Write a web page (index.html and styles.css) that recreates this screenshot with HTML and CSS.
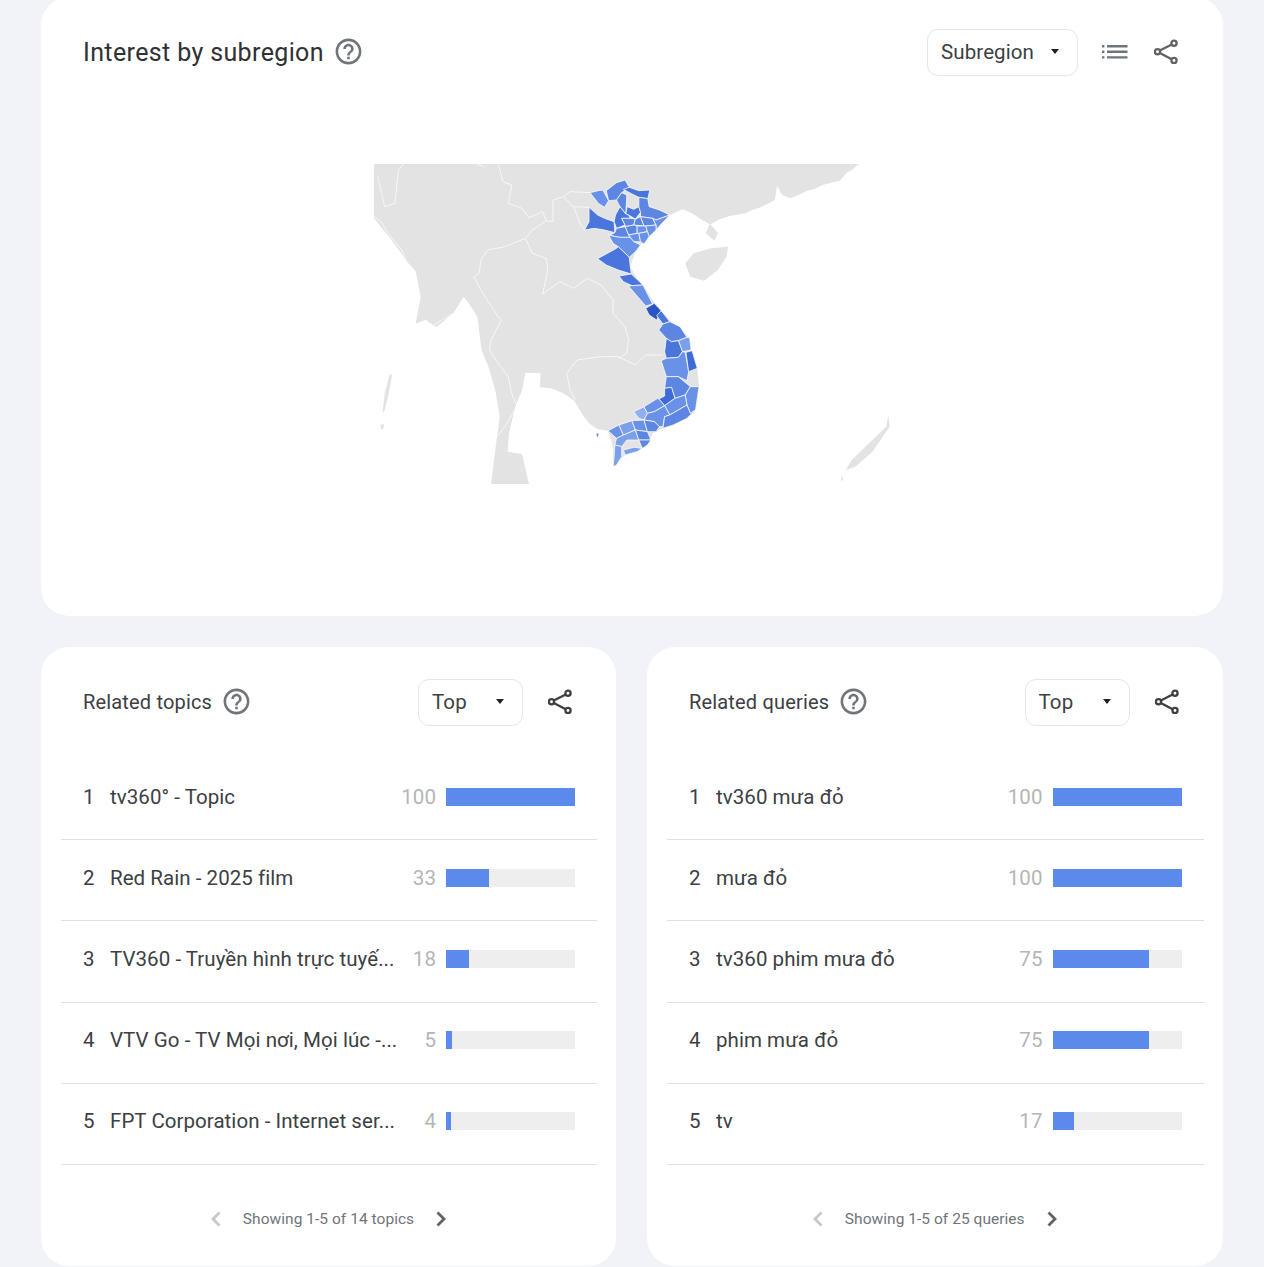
FILE: index.html
```html
<!DOCTYPE html>
<html lang="en">
<head>
<meta charset="utf-8">
<title>Interest by subregion</title>
<link rel="stylesheet" href="styles.css">
</head>
<body>
<svg class="defs" width="0" height="0" aria-hidden="true">
  <symbol id="help" viewBox="0 0 24 24"><path d="M11 18h2v-2h-2v2zm1-16C6.48 2 2 6.48 2 12s4.48 10 10 10 10-4.48 10-10S17.52 2 12 2zm0 18c-4.41 0-8-3.59-8-8s3.59-8 8-8 8 3.59 8 8-3.59 8-8 8zm0-14c-2.21 0-4 1.79-4 4h2c0-1.1.9-2 2-2s2 .9 2 2c0 2-3 1.75-3 5h2c0-2.25 3-2.5 3-5 0-2.21-1.79-4-4-4z"/></symbol>
  <symbol id="share" viewBox="0 0 24 24"><g fill="none" stroke="currentColor" stroke-width="2.300"><circle cx="20" cy="3.700" r="2.600"/><circle cx="3.500" cy="12.300" r="2.600"/><circle cx="20" cy="21" r="2.600"/><path d="M5.800 11.100 17.700 5M5.800 13.500 17.700 19.700"/></g></symbol>
  <symbol id="caret" viewBox="0 0 10 6"><path d="M0 0h10L5 6z"/></symbol>
  <symbol id="list" viewBox="0 0 26 14"><path d="M0 0h2.400v2.400H0zM0 5.600h2.400V8H0zM0 11.200h2.400v2.400H0zM5 0h20.500v2.400H5zM5 5.600h20.500V8H5zM5 11.200h20.500v2.400H5z"/></symbol>
  <symbol id="prev" viewBox="0 0 12 16"><path d="M9.500 1.500 3 8l6.500 6.500" fill="none" stroke="currentColor" stroke-width="2.800"/></symbol>
  <symbol id="next" viewBox="0 0 12 16"><path d="M2.500 1.500 9 8l-6.500 6.500" fill="none" stroke="currentColor" stroke-width="2.800"/></symbol>
</svg>
<main class="page">
  <section class="card card-map">
    <header class="card-head head-map">
      <h2 class="title title-large">Interest by subregion</h2>
      <svg class="icon-help"><use href="#help"/></svg>
      <div class="spacer"></div>
      <div class="select select-region"><span>Subregion</span><svg class="caret"><use href="#caret"/></svg></div>
      <svg class="icon-list"><use href="#list"/></svg>
      <svg class="icon-share"><use href="#share"/></svg>
    </header>
    <svg class="map" viewBox="39 42 1505 960" preserveAspectRatio="none" width="517" height="320" role="img" aria-label="Map of Vietnam by subregion">
      <g class="land">
        <path d="M39 42H1450L1430 60 1415 68 1395 92 1370 98 1345 105 1320 118 1300 122 1275 135 1250 145 1228 135 1212 108 1206 150 1165 172 1140 180 1120 190 1075 198 1045 208 1015 225 1005 250 1030 272 1040 248 1020 225 990 207 965 190 938 178 900 195 870 228 840 260 815 285 800 305 785 350 810 395 822 405 850 450 875 482 900 510 950 555 962 600 980 655 985 710 975 780 950 805 880 835 850 850 835 885 820 895 770 915 735 950 735 890 720 842 690 838 665 820 650 800 622 752 590 730 555 715 522 712 524 670 480 668 470 720 450 770 432 850 428 905 470 912 490 1002H380L392 900 405 800 392 720 372 650 352 600 340 500 318 465 300 440 270 490 220 532 190 510 160 522 175 440 160 362 130 330 120 312 90 270 60 232 39 205Z"/>
        <path d="M945 340 970 310 1020 295 1070 290 1065 320 1040 360 1000 392 960 380Z"/>
        <path d="M85 672 92 675 80 740 70 780 64 790 70 730Z"/>
        <path d="M58 825 68 822 66 838 60 838Z"/>
        <path d="M1536 795 1540 830 1490 905 1440 950 1412 960 1430 930 1480 880 1530 830Z"/>
        <path d="M1400 975 1405 990 1398 992Z"/>
      </g>
      <g class="borders">
        <path d="M400 42 415 95 440 105 430 160 470 175 490 203 530 185 540 212 560 215 560 150 590 140 620 170 665 172"/>
        <path d="M590 140 610 125 668 128"/>
        <path d="M620 170 640 222 652 240"/>
        <path d="M540 212 500 240 480 265 420 290 370 300 350 330 345 370 330 380 350 420 400 500 410 510 380 570 375 600 400 640 430 680 440 730 455 770 420 830 395 862"/>
        <path d="M480 265 500 310 540 325 545 360 530 432 580 395 620 415 660 385 700 405 735 450 735 490 770 530 780 570 775 610 750 625"/>
        <path d="M625 750 610 720 600 670 630 630 700 620 750 620 800 645 830 615 880 615"/>
        <path d="M50 80 70 170 100 160 110 60 125 42"/>
        <path d="M39 200 60 215 80 250 120 300 140 350"/>
        <path d="M340 42 360 52"/>
        <path d="M160 522 190 510 205 530 270 490"/>
      </g>
      <g class="prov">
        <path class="c2" d="M668 128 692 122 705 120 722 152 710 172 692 160Z"/>
        <path class="c3" d="M715 122 745 98 770 90 782 112 760 128 745 150 722 152Z"/>
        <path class="c4" d="M765 118 782 112 810 122 842 120 836 146 810 142 790 132Z"/>
        <path class="c3" d="M745 150 760 128 775 135 773 172 772 192 755 170Z"/>
        <path class="c4" d="M776 170 795 178 810 170 815 187 800 207 780 195 772 192Z"/>
        <path class="c3" d="M810 142 836 146 840 170 870 180 900 195 860 210 850 205 815 200 815 187 810 170Z"/>
        <path class="c4" d="M665 172 690 195 710 205 738 215 740 248 710 240 680 235 652 240 665 215Z"/>
        <path class="c4" d="M755 170 772 192 780 195 785 205 760 205 770 225 745 235 738 215 742 195Z"/>
        <path class="c3" d="M760 205 785 205 800 207 795 225 770 230 770 225Z"/>
        <path class="c3" d="M800 207 815 200 825 228 795 225Z"/>
        <path class="c3" d="M815 200 850 205 860 225 830 228 825 228Z"/>
        <path class="c2" d="M850 205 860 210 900 195 870 228 860 240 860 225Z"/>
        <path class="c3" d="M770 230 795 225 805 228 805 250 780 255Z"/>
        <path class="c2" d="M805 228 830 228 835 245 810 250 805 250Z"/>
        <path class="c2" d="M830 228 860 225 860 240 840 260 835 245Z"/>
        <path class="c2" d="M780 255 805 250 810 250 815 275 795 275 785 262Z"/>
        <path class="c2" d="M810 250 835 245 840 260 825 282 815 275Z"/>
        <path class="c3" d="M745 235 770 230 780 255 785 262 755 262 725 256 740 248Z"/>
        <path class="c2" d="M722 256 755 262 785 262 795 275 815 285 800 305 782 322 750 290 735 280Z"/>
        <path class="c4" d="M690 326 745 295 750 290 782 322 785 350 788 372 750 360 715 345Z"/>
        <path class="c4" d="M752 378 788 372 822 405 790 407 765 395Z"/>
        <path class="c2" d="M780 408 790 407 822 405 850 462 830 468Z"/>
        <path class="c6" d="M830 475 855 460 875 482 862 510 840 495Z"/>
        <path class="c4" d="M862 497 875 482 900 515 880 522Z"/>
        <path class="c3" d="M868 540 880 522 900 515 930 530 950 562 925 572 905 575 890 565Z"/>
        <path class="c1" d="M925 572 950 562 958 563 962 600 937 605Z"/>
        <path class="c4" d="M890 565 905 575 925 572 937 605 925 622 890 625 885 605Z"/>
        <path class="c2" d="M890 625 925 622 937 605 945 607 955 665 950 692 925 680 890 680 875 632Z"/>
        <path class="c5" d="M947 607 965 602 980 655 955 665Z"/>
        <path class="c3" d="M890 680 925 680 960 710 945 735 915 745 905 712 885 715Z"/>
        <path class="c5" d="M885 715 905 712 915 745 885 767 868 747 885 738Z"/>
        <path class="c2" d="M960 710 985 710 975 780 960 790 950 765 945 735Z"/>
        <path class="c2" d="M915 745 945 735 950 765 900 795 885 767Z"/>
        <path class="c0" d="M795 785 825 770 835 790 825 810 810 805Z"/>
        <path class="c2" d="M825 770 865 745 868 747 885 767 855 785 835 790Z"/>
        <path class="c2" d="M835 790 855 785 885 767 900 795 885 800 880 830 870 830 855 815 825 810Z"/>
        <path class="c3" d="M885 800 900 795 950 765 960 790 975 780 950 805 910 825 880 835Z"/>
        <path class="c2" d="M720 842 752 825 765 855 745 865Z"/>
        <path class="c1" d="M752 825 790 812 800 840 765 855Z"/>
        <path class="c2" d="M790 812 825 810 835 845 800 840Z"/>
        <path class="c3" d="M825 810 855 815 870 830 860 845 835 845Z"/>
        <path class="c1" d="M745 865 765 855 800 840 810 870 775 870 760 890 740 885Z"/>
        <path class="c3" d="M800 840 835 845 845 870 810 870Z"/>
        <path class="c3" d="M810 870 845 870 835 885 820 895Z"/>
        <path class="c1" d="M740 885 760 890 760 920 745 945 735 950 738 920Z"/>
        <path class="c1" d="M765 900 795 892 820 895 805 905 770 915Z"/>
        <path class="c2" d="M686 848 694 850 692 862 686 860Z"/>
      </g>
    </svg>
  </section>

  <div class="pair">
    <section class="card">
      <header class="card-head">
        <h2 class="title">Related topics</h2>
        <svg class="icon-help"><use href="#help"/></svg>
        <div class="spacer"></div>
        <div class="select"><span>Top</span><svg class="caret"><use href="#caret"/></svg></div>
        <svg class="icon-share dark"><use href="#share"/></svg>
      </header>
      <ol class="rows">
        <li class="row"><span class="rank">1</span><span class="label">tv360° - Topic</span><span class="value">100</span><span class="track"><span class="fill" style="width:100%"></span></span></li>
        <li class="row"><span class="rank">2</span><span class="label">Red Rain - 2025 film</span><span class="value">33</span><span class="track"><span class="fill" style="width:33%"></span></span></li>
        <li class="row"><span class="rank">3</span><span class="label">TV360 - Truyền hình trực tuyế...</span><span class="value">18</span><span class="track"><span class="fill" style="width:18%"></span></span></li>
        <li class="row"><span class="rank">4</span><span class="label">VTV Go - TV Mọi nơi, Mọi lúc -...</span><span class="value">5</span><span class="track"><span class="fill" style="width:5%"></span></span></li>
        <li class="row"><span class="rank">5</span><span class="label">FPT Corporation - Internet ser...</span><span class="value">4</span><span class="track"><span class="fill" style="width:4%"></span></span></li>
      </ol>
      <footer class="pager">
        <svg class="chev off"><use href="#prev"/></svg>
        <span>Showing 1-5 of 14 topics</span>
        <svg class="chev"><use href="#next"/></svg>
      </footer>
    </section>
    <section class="card">
      <header class="card-head">
        <h2 class="title">Related queries</h2>
        <svg class="icon-help"><use href="#help"/></svg>
        <div class="spacer"></div>
        <div class="select"><span>Top</span><svg class="caret"><use href="#caret"/></svg></div>
        <svg class="icon-share dark"><use href="#share"/></svg>
      </header>
      <ol class="rows">
        <li class="row"><span class="rank">1</span><span class="label">tv360 mưa đỏ</span><span class="value">100</span><span class="track"><span class="fill" style="width:100%"></span></span></li>
        <li class="row"><span class="rank">2</span><span class="label">mưa đỏ</span><span class="value">100</span><span class="track"><span class="fill" style="width:100%"></span></span></li>
        <li class="row"><span class="rank">3</span><span class="label">tv360 phim mưa đỏ</span><span class="value">75</span><span class="track"><span class="fill" style="width:75%"></span></span></li>
        <li class="row"><span class="rank">4</span><span class="label">phim mưa đỏ</span><span class="value">75</span><span class="track"><span class="fill" style="width:75%"></span></span></li>
        <li class="row"><span class="rank">5</span><span class="label">tv</span><span class="value">17</span><span class="track"><span class="fill" style="width:17%"></span></span></li>
      </ol>
      <footer class="pager">
        <svg class="chev off"><use href="#prev"/></svg>
        <span>Showing 1-5 of 25 queries</span>
        <svg class="chev"><use href="#next"/></svg>
      </footer>
    </section>
  </div>
</main>
</body>
</html>
```

FILE: styles.css
```css
* { box-sizing: border-box; }
html, body { margin: 0; padding: 0; }
body {
  background: #f1f3f9;
  color: #202124;
  font-family: Roboto, "Noto Sans", sans-serif;
  overflow: hidden;
  height: 1267px;
}
.defs { display: block; }
.page {
  display: flex;
  flex-direction: column;
  gap: 31px;
  margin-top: -3px;
  padding: 0 41px;
}
.card {
  background: #fff;
  border-radius: 28px;
  min-width: 0;
}
.card-map { height: 619px; padding-top: 32px; }
.pair {
  display: grid;
  grid-template-columns: 575px 575.500px;
  gap: 31px;
}
.pair .card { height: 619px; padding-top: 32px; }
.card-head {
  display: flex;
  align-items: center;
  height: 47px;
  padding: 0 44px 0 42px;
}
.head-map { padding-right: 45px; }
.title {
  margin: 0 0 2px;
  font-weight: 400;
  font-size: 20px;
  letter-spacing: .17px;
  color: #3c4043;
}
.title-large { margin-bottom: 0; font-size: 25px; letter-spacing: .37px; color: #303134; }
.icon-help { width: 31px; height: 31px; margin: 0 0 2px 9px; fill: #70757a; }
.title-large + .icon-help { margin-left: 9px; }
.spacer { flex: 1; }
.select {
  display: flex;
  align-items: center;
  justify-content: space-between;
  width: 105px;
  height: 47px;
  padding: 0 18px 2px 13px;
  border: 1px solid #e6e6e6;
  border-radius: 11px;
  font-size: 20.500px;
  letter-spacing: .1px;
  color: #3c4043;
}
.select-region { width: 151px; }
.caret { width: 8px; height: 5px; fill: #202124; }
.icon-list { width: 26px; height: 14px; margin: 0 0 2px 24px; fill: #70757a; }
.icon-share { width: 24px; height: 25px; margin: 0 0 2px 26px; color: #5f6368; }
.icon-share.dark { margin-left: 25px; color: #3c4043; }
.map { display: block; margin: 88px auto 0; filter: blur(.35px); }
.land { fill: #e3e3e3; }
.borders { fill: none; stroke: #fff; stroke-width: 2.500; opacity: .85; }
.prov path { stroke: #fff; stroke-width: 2.200; stroke-linejoin: round; }
.c0 { fill: #90aff0; }
.c1 { fill: #7c9fec; }
.c2 { fill: #6a91e8; }
.c3 { fill: #5c86e2; }
.c4 { fill: #4a76dc; }
.c5 { fill: #3e6bd6; }
.c6 { fill: #2a55c5; }
.rows { list-style: none; margin: 33px 19px 0 20px; padding: 0; }
.row {
  display: flex;
  align-items: center;
  height: 81.200px;
  padding: 0 22px 5px;
  border-bottom: 1px solid #e0e0e0;
  font-size: 20.500px;
  letter-spacing: .05px;
  color: #3c4043;
}
.rank { width: 27px; flex: none; }
.label { flex: 1; min-width: 0; white-space: nowrap; overflow: hidden; }
.value { margin-right: 10px; color: #b5b5b5; }
.track { display: block; flex: none; width: 129px; height: 18px; background: #eee; }
.fill { display: block; height: 100%; background: #5a8aeb; }
.pager {
  display: flex;
  align-items: center;
  justify-content: center;
  gap: 21px;
  margin-top: 42px;
  height: 24px;
  font-size: 15.500px;
  letter-spacing: .04px;
  color: #70757a;
}
.chev { width: 12px; height: 16px; color: #5f6368; }
.chev.off { color: #c8c8c8; }
```
